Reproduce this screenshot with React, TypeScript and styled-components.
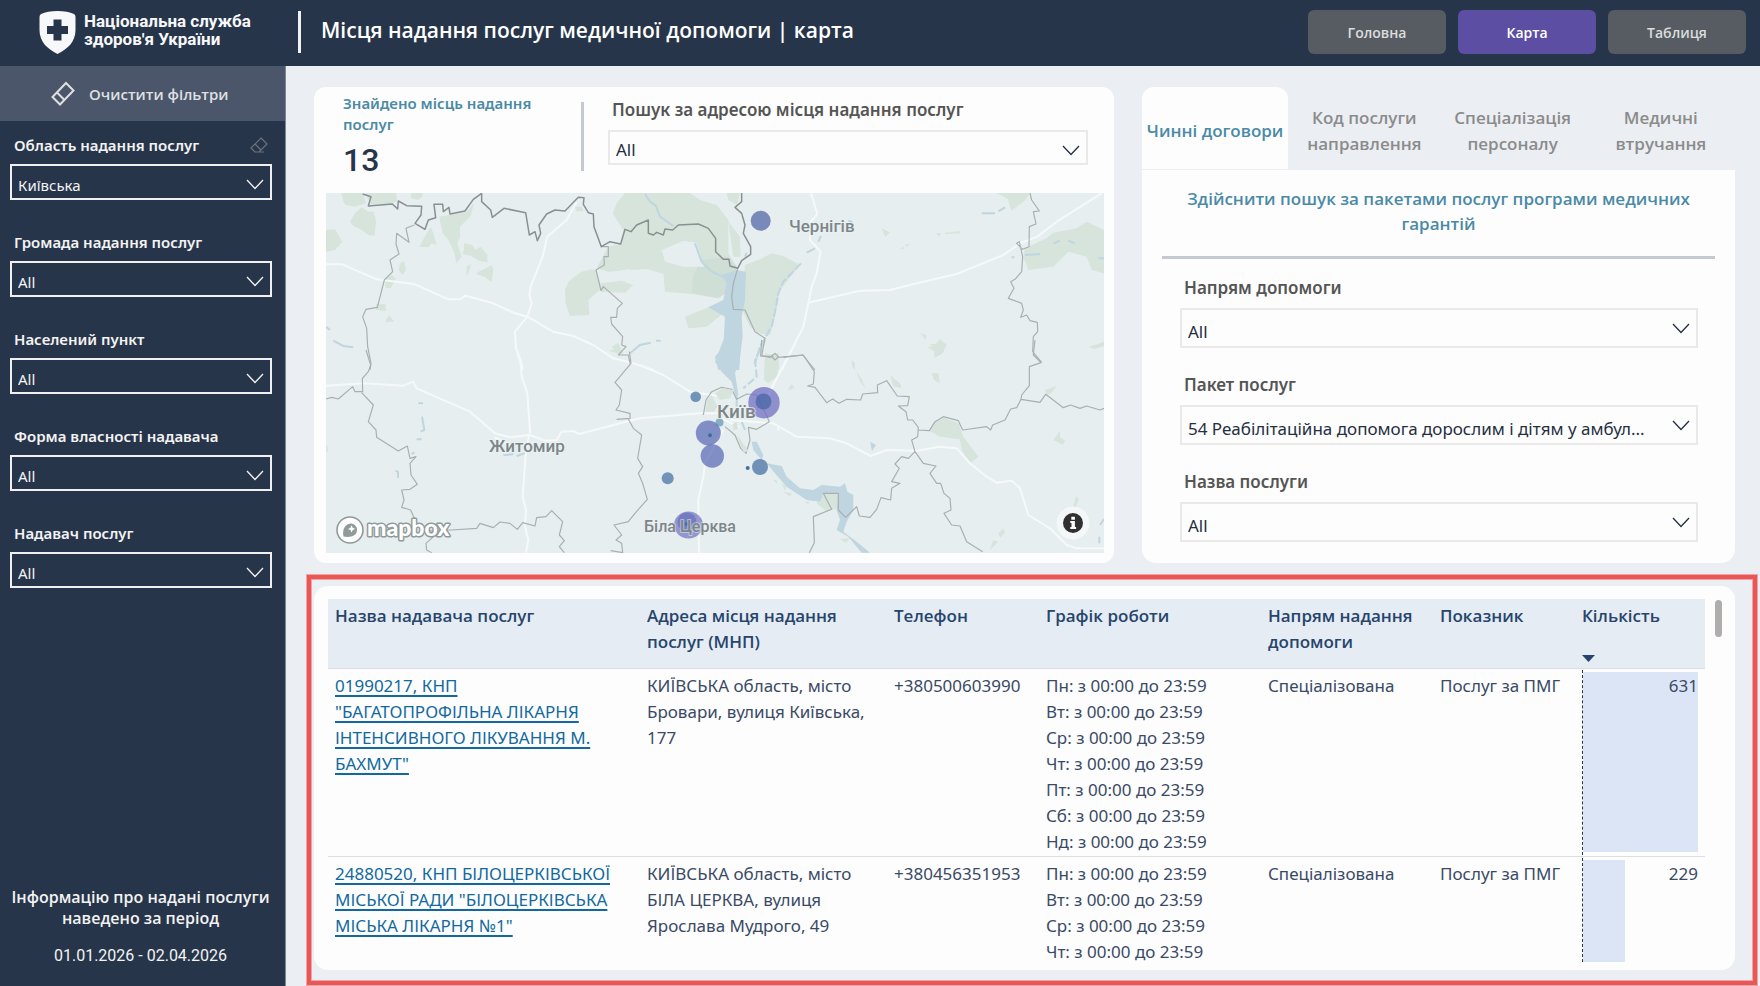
import React, { useId } from "react";
import styled, { createGlobalStyle } from "styled-components";

const color = {
  navy: "#27354a",
  page: "#ebeff3",
  card: "#fdfdfd",
  teal: "#4a8aa6",
  ink: "#252f42",
  label: "#555555",
  line: "#c5cad2",
  box: "#e9e9e9",
};

const uiFont = '"Open Sans", "Noto Sans", sans-serif';
const textFont = '"Noto Sans", "Open Sans", sans-serif';
const brandFont = 'Roboto, "Noto Sans", sans-serif';

const GlobalStyle = createGlobalStyle`
  *, *::before, *::after { box-sizing: border-box; }
  body { margin: 0; background: ${color.page}; font-family: ${uiFont}; color: ${color.ink}; }
  button, select { font-family: inherit; margin: 0; }
  h1, h2, p { margin: 0; font-weight: inherit; }
`;

/* ---------- page frame ---------- */

const Page = styled.div`
  display: flex;
  flex-direction: column;
  height: 100vh;
  overflow: hidden;
`;

const Header = styled.header`
  display: flex;
  align-items: center;
  height: 66px;
  flex: none;
  padding: 0 14px 2px 39px;
  background: ${color.navy};
  color: #fff;
`;

const Brand = styled.div`
  display: flex;
  align-items: center;
  gap: 8px;
  width: 259px;
  flex: none;
  font: 700 17px/18px ${brandFont};
  color: #f7f8f9;
`;

const BrandName = styled.span`
  padding-bottom: 5px;
`;

const HeaderRule = styled.span`
  width: 3px;
  height: 42px;
  margin-right: 20px;
  background: #f1f2f4;
`;

const PageTitle = styled.h1`
  flex: 1;
  padding-bottom: 4px;
  font-size: 21px;
  line-height: 28px;
  font-weight: 600;
`;

const PageNav = styled.nav`
  display: flex;
  gap: 12px;
`;

const NavButton = styled.button<{ $active?: boolean }>`
  width: 138px;
  height: 44px;
  padding: 0;
  border: 0;
  border-radius: 6px;
  background: ${(p) => (p.$active ? "#5c4ea3" : "#575c63")};
  color: ${(p) => (p.$active ? "#ffffff" : "#dcdcdc")};
  font-size: 14px;
  font-weight: 600;
`;

const Body = styled.div`
  display: flex;
  flex: 1;
  min-height: 0;
`;

/* ---------- sidebar ---------- */

const Sidebar = styled.aside`
  display: flex;
  flex-direction: column;
  width: 286px;
  flex: none;
  border-right: 1px solid #7f8794;
  background: ${color.navy};
  color: #f3f3f3;
`;

const ClearButton = styled.button`
  display: flex;
  align-items: center;
  gap: 14px;
  height: 55px;
  flex: none;
  padding: 0 0 0 51px;
  border: 0;
  background: #4b566a;
  color: #dfe0e2;
  font-size: 15px;
  font-weight: 600;
`;

const SideFilters = styled.div`
  display: flex;
  flex-direction: column;
  gap: 29px;
  padding: 11px 13px 0 10px;
`;

const Period = styled.div`
  margin-top: auto;
  padding: 0 4px 20px 0;
  text-align: center;
  font: 600 16px/21px ${uiFont};
  white-space: nowrap;
`;

const PeriodDates = styled.p`
  padding-top: 17px;
  font: 400 16px/20px ${brandFont};
`;

/* ---------- filter fields ---------- */

type Tone = "side" | "top" | "panel";

const fieldMetrics = {
  side: { label: 26, gap: 6, box: 36, drop: 6, size: 15, text: "#f3f3f3", labelText: "#f3f3f3", line: "#f0f0f0" },
  top: { label: 22, gap: 9, box: 35, drop: 4, size: 17, text: color.ink, labelText: color.label, line: color.box },
  panel: { label: 32, gap: 4, box: 40, drop: 6, size: 17, text: color.ink, labelText: color.label, line: color.box },
};

const Field = styled.div`
  display: flex;
  flex-direction: column;
`;

const FieldLabel = styled.label<{ $tone: Tone }>`
  display: flex;
  align-items: center;
  justify-content: space-between;
  height: ${(p) => fieldMetrics[p.$tone].label}px;
  padding: 0 4px;
  color: ${(p) => fieldMetrics[p.$tone].labelText};
  font-family: ${textFont};
  font-size: ${(p) => fieldMetrics[p.$tone].size}px;
  line-height: 22px;
  font-weight: 600;
`;

const SelectWrap = styled.div<{ $tone: Tone }>`
  position: relative;
  display: flex;
  margin-top: ${(p) => fieldMetrics[p.$tone].gap}px;
  color: ${(p) => fieldMetrics[p.$tone].text};
`;

const SelectBox = styled.select<{ $tone: Tone }>`
  appearance: none;
  width: 100%;
  height: ${(p) => fieldMetrics[p.$tone].box}px;
  padding: ${(p) => fieldMetrics[p.$tone].drop}px 30px 0 6px;
  border: 2px solid ${(p) => fieldMetrics[p.$tone].line};
  border-radius: 0;
  background: transparent;
  color: inherit;
  font-family: ${textFont};
  font-size: ${(p) => fieldMetrics[p.$tone].size}px;

  option { color: ${color.ink}; }
`;

const SelectArrow = styled.svg`
  position: absolute;
  right: 8px;
  top: 15px;
  pointer-events: none;
`;

function Filter({ label, value, tone, action }: { label: string; value: string; tone: Tone; action?: React.ReactNode }) {
  const id = useId();
  return (
    <Field>
      <FieldLabel htmlFor={id} $tone={tone}>
        {label}
        {action}
      </FieldLabel>
      <SelectWrap $tone={tone}>
        <SelectBox id={id} $tone={tone} defaultValue={value}>
          <option>{value}</option>
        </SelectBox>
        <SelectArrow width="18" height="11" viewBox="0 0 18 11" fill="none" stroke="currentColor" strokeWidth="1.3">
          <path d="M1 1 9 9.500 17 1" />
        </SelectArrow>
      </SelectWrap>
    </Field>
  );
}

/* ---------- content ---------- */

const Content = styled.main`
  display: flex;
  flex-direction: column;
  flex: 1;
  min-width: 0;
  padding: 21px 3px 1px 21px;
`;

const TopRow = styled.div`
  display: grid;
  grid-template-columns: 800fr 593fr;
  gap: 28px;
  flex: none;
  padding: 0 22px 11px 7px;
`;

const MapCard = styled.section`
  min-width: 0;
  padding: 0 10px 10px 12px;
  border-radius: 12px;
  background: ${color.card};
`;

const MapHead = styled.div`
  display: flex;
  height: 106px;
`;

const Counter = styled.div`
  width: 255px;
  flex: none;
  padding: 6px 40px 0 17px;
  color: ${color.teal};
  font: 600 15px/21px ${textFont};
`;

const CounterValue = styled.p`
  padding: 5px 0 0;
  color: ${color.navy};
  font: 500 32px/40px ${brandFont};
`;

const HeadRule = styled.span`
  width: 3px;
  height: 69px;
  margin: 15px 24px 0 0;
  background: ${color.line};
`;

const AddressSearch = styled.div`
  flex: 1;
  padding: 12px 16px 0 0;
`;

const MapFrame = styled.div`
  position: relative;
  height: 360px;
  overflow: hidden;
  background: #e6eeef;
`;

const MapCanvas = styled.svg`
  display: block;
  width: 100%;
  height: 100%;
`;

const MapLogo = styled.a`
  position: absolute;
  left: 8px;
  bottom: 7px;
  display: flex;
`;

const InfoButton = styled.button`
  position: absolute;
  right: 14px;
  bottom: 13px;
  display: flex;
  padding: 0;
  border: 0;
  background: none;
`;

const SearchPanel = styled.section`
  display: flex;
  flex-direction: column;
  min-width: 0;
`;

const Tabs = styled.div`
  display: grid;
  grid-template-columns: repeat(4, 1fr);
  height: 82px;
  margin-bottom: 1px;
`;

const Tab = styled.button<{ $active?: boolean }>`
  padding: 6px 0 0;
  margin-right: ${(p) => (p.$active ? 2 : 0)}px;
  border: 0;
  border-radius: 12px 12px 0 0;
  background: ${(p) => (p.$active ? color.card : "transparent")};
  color: ${(p) => (p.$active ? color.teal : "#8b8b8b")};
  font-size: 17px;
  line-height: 26px;
  font-weight: 600;
`;

const PanelBody = styled.div`
  flex: 1;
  padding: 16px 20px 0;
  border-radius: 0 0 14px 14px;
  background: ${color.card};
`;

const PanelTitle = styled.h2`
  padding-bottom: 20px;
  border-bottom: 3px solid ${color.line};
  color: ${color.teal};
  font-size: 17px;
  line-height: 25px;
  font-weight: 600;
  text-align: center;
`;

const PanelFilters = styled.div`
  display: flex;
  flex-direction: column;
  gap: 21px;
  padding: 13px 17px 0 18px;
`;

/* ---------- table ---------- */

const Highlight = styled.section`
  flex: 1;
  min-height: 0;
  display: flex;
  margin: 1px 0 0;
  padding: 7px 18px 11px 3px;
  border: 4px solid #e85656;
  box-shadow: 0 0 0 1px #efa3a4, inset 0 0 0 1px #efa3a4;
`;

const TableCard = styled.div`
  display: flex;
  flex: 1;
  min-width: 0;
  gap: 10px;
  padding: 13px 13px 8px 14px;
  border-radius: 14px;
  background: ${color.card};
`;

const TableView = styled.div`
  flex: 1;
  min-width: 0;
  overflow: hidden;
`;

const ScrollThumb = styled.span`
  width: 7px;
  height: 37px;
  margin-top: 1px;
  border-radius: 4px;
  background: #b0aeac;
`;

const Table = styled.table`
  width: 100%;
  table-layout: fixed;
  border-collapse: separate;
  border-spacing: 0;
  font-family: ${textFont};
  font-size: 17px;
  line-height: 26px;
`;

const HeadCell = styled.th`
  position: relative;
  height: 70px;
  padding: 4px 7px;
  border-bottom: 1px solid #dcdde3;
  background: #e5ecf4;
  color: #27456b;
  font-family: ${uiFont};
  font-weight: 600;
  text-align: left;
  vertical-align: top;
`;

const SortMark = styled.svg`
  position: absolute;
  left: 7px;
  bottom: 6px;
`;

const Cell = styled.td`
  height: 188px;
  padding: 4px 7px 1px;
  border-bottom: 1px solid #dcdddf;
  color: #3a4a66;
  vertical-align: top;
  white-space: nowrap;
`;

const AmountCell = styled(Cell)`
  position: relative;
  text-align: right;
`;

const AmountBar = styled.span`
  position: absolute;
  inset: 3px 7px 4px 8px;
`;

const AmountFill = styled.span`
  display: block;
  height: 100%;
  background: #dce5f6;
`;

const AmountAxis = styled.span`
  position: absolute;
  inset: 1px auto 1px 7px;
  border-left: 1px dashed #27354a;
`;

const AmountText = styled.span`
  position: relative;
`;

const ProviderLink = styled.a`
  color: #12699f;
  text-decoration: underline;
  text-decoration-thickness: 2px;
  text-underline-offset: 3px;
`;

const columns = [
  { name: "Назва надавача послуг", share: 312 },
  { name: "Адреса місця надання послуг (МНП)", share: 247 },
  { name: "Телефон", share: 152 },
  { name: "Графік роботи", share: 222 },
  { name: "Напрям надання допомоги", share: 172 },
  { name: "Показник", share: 142 },
  { name: "Кількість", share: 130 },
];
const shareTotal = columns.reduce((sum, c) => sum + c.share, 0);

const week = ["Пн", "Вт", "Ср", "Чт", "Пт", "Сб", "Нд"];

const rows = [
  {
    provider: ["01990217, КНП", '"БАГАТОПРОФІЛЬНА ЛІКАРНЯ', "ІНТЕНСИВНОГО ЛІКУВАННЯ М.", 'БАХМУТ"'],
    address: ["КИЇВСЬКА область, місто", "Бровари, вулиця Київська,", "177"],
    phone: "+380500603990",
    days: 7,
    amount: 631,
  },
  {
    provider: ["24880520, КНП БІЛОЦЕРКІВСЬКОЇ", 'МІСЬКОЇ РАДИ "БІЛОЦЕРКІВСЬКА', "МІСЬКА ЛІКАРНЯ №1\""],
    address: ["КИЇВСЬКА область, місто", "БІЛА ЦЕРКВА, вулиця", "Ярослава Мудрого, 49"],
    phone: "+380456351953",
    days: 4,
    amount: 229,
  },
];
const maxAmount = 631;

function Lines({ items }: { items: string[] }) {
  return (
    <>
      {items.map((text, i) => (
        <React.Fragment key={text}>
          {i > 0 && <br />}
          {text}
        </React.Fragment>
      ))}
    </>
  );
}

/* ---------- icons ---------- */

function Shield() {
  return (
    <svg width="37" height="43" viewBox="0 0 37 43">
      <path fill="#f7f8f9" d="M18.500 0C25 0 31 1 35 3q1.500.8 1.500 3v13c0 12-8 19-18 24C8.500 38 .5 31 .5 19V6q0-2.200 1.500-3C6 1 12 0 18.500 0Z" />
      <path fill={color.navy} d="M14.500 8.500h8v6.500h6.500v8h-6.500v6.500h-8V23H8v-8h6.500z" />
    </svg>
  );
}

function Eraser() {
  return (
    <svg width="24" height="25" viewBox="0 0 24 25" fill="none" stroke="#dfe0e2" strokeWidth="2">
      <path d="M15 2 22.500 9.500 9 23.500 1.500 16ZM6 11.500l7.500 7.500" />
    </svg>
  );
}

function SmallEraser() {
  return (
    <svg width="18" height="16" viewBox="0 0 18 16" fill="none" stroke="#6c737d" strokeWidth="1.200">
      <path d="M11 1 17 7 9 15H5L1 11ZM5 7l6 6M5 15h9" />
    </svg>
  );
}

/* ---------- map ---------- */

const land = "#e6eeef";
const forest = "#d6e4dc";
const water = "#bfd5e0";

// Four map tiles, each drawn with three units to the pixel.
const tile = {
  nw: "translate(-26 -123) scale(.33333)",
  ne: "translate(374 -123) scale(.33333)",
  sw: "translate(-26 157) scale(.33333)",
  se: "translate(314 147) scale(.33333)",
};

function RegionMap() {
  return (
    <MapCanvas viewBox="0 0 778 360" preserveAspectRatio="xMidYMid slice" role="img" aria-label="Карта">
      <g fill={forest}>
        <g transform={tile.nw}>
          <path d="M125 369H188L198 400 165 410 138 405 130 395ZM150 455 165 430 185 412 205 425 222 425 228 455 224 497 205 495 185 480 160 468ZM78 480 105 478 127 515 105 540 78 545ZM195 369H290L290 395 270 403 213 403ZM333 369h36l-4 14-14 6-18-4zM418 440 500 425 522 400 512 438 480 470 480 500 472 520 485 560 470 580 462 545 445 510 428 490ZM392 470 400 490 410 525 395 520 385 532 358 530 372 505ZM492 520l25 5 10 15 15-10 20 25v22l-25-5-25-15-25-6 5-14zM500 590l14-8-8 25-7 10zM530 608l45-22 5 12-5 38-20-15-25-8zM300 580l12-6 6 25-10 16-12-14zM255 630l20-15 12 12-15 28-15-2zM228 702h28l2 22-30-5zM255 755l12-20 16 20zM795 660 805 635 845 605 875 598 890 600 905 655 865 690 868 735 810 738 797 700ZM903 640 965 632 1000 645 975 668 905 665ZM935 830l20-12 10 25-15 8zM1280 369H1320L1310 405 1285 390zM1155 740 1230 710 1270 730 1220 770 1165 775Z" />
          <path d="M938 430 950 400 975 369H1170L1200 390 1250 405 1285 450 1285 550 1310 590 1290 660 1255 685 1175 672 1095 665 1090 612 1040 597 925 605 890 595 925 530 965 520 970 480Z" />
          <path fill="#cfdfd5" d="M1205 570 1285 560 1310 590 1290 660 1255 685 1175 668 1180 615Z" />
          <path fill={land} d="M1085 540 1150 512 1190 518 1212 590 1150 590 1095 575ZM925 608 985 598 1090 612 1092 660 1040 635 985 640Z" />
          <path d="M1285 455 1320 500 1322 560 1300 560Z" />
          <path d="M825 410h20l5 14h-20z" />
        </g>
        <g transform={tile.ne}>
          <path d="M135 585 180 568 215 550 250 558 290 580 300 585 240 660 225 740 210 795 175 790 150 770 125 715ZM890 369h102l-20 25-38 28-10-35zM975 535 1040 505 1060 488 1130 475 1160 455 1212 480V610L1175 600 1160 560 1105 545 1060 590 985 600 970 560ZM545 475l25 12-14 14zM735 488l45-4v6l-45 2zM708 490l16 0-6 10zM600 538l12-8 0 6zM615 525l14-4-8 10zM682 830l18 0 20-22 20 16-15 28-22 12 0-20zM662 790l17 5-2 15zM1165 830l30-8 17-8v15l-30 8zM455 870l10 10v20l-8-8zM195 855l42-5v50h-42z" />
        </g>
        <g transform={tile.sw}><path d="M78 285l5 5v15l-5 3zM925 0h40l5 12-30-5z" /></g>
        <g transform={tile.se}>
          <path d="M375 40 415 50 412 108 385 130 372 120ZM632 60l12 20 2 12zM650 95l15 22 12 30-18-25zM870 12l45 0-5 25-25 15-2-25zM875 100l20 0 5 30-18-10zM750 105l30 25 5 15-25-6zM1215 150l35-12-15 20-15 8zM1240 300l20-28 0 20 16 10-8 12zM868 272 880 250 908 232 955 250 970 290 1015 350 990 370 965 330 960 298 900 290ZM1300 500l8-32 8 10-8 22zM1050 630l10-30 15 5zM1075 580l15-15 5 12-14 16zM530 490 552 462H595L592 505 560 515ZM600 598l30-5-12 15zM400 420l10 0 3 14zM425 430l15 10-5 12zM430 455l25 5-5 10zM495 485l14 0-5 8zM445 145l10-12 8 10-15 8z" />
        </g>
      </g>

      <g fill={water}>
        <g transform={tile.nw}>
          <path d="M1310 600 1338 605 1335 690 1325 740 1328 800 1320 860 1318 900H1255L1245 860 1270 830 1275 740 1225 712 1270 690 1280 640 1265 615Z" />
        </g>
        <g transform={tile.se}>
          <path d="M250 0H302L300 60 285 100 295 165H285L275 125 245 95 225 65ZM335 305H350L370 345 365 360 340 330ZM380 370 425 378 440 410 480 445 520 450 545 435 600 440 615 430 622 455 640 465V510L620 545 610 575 650 605 690 638H665L625 590 590 570 600 540 590 510 595 462 550 460 540 485 500 480 440 440 405 400ZM690 305l18 10-12 18z" />
        </g>
      </g>

      <g fill="none" stroke={water} strokeWidth="6">
        <g transform={tile.nw}>
          <path d="M1035 372 1050 395 1068 408 1080 440 1120 468M1185 520 1205 575 1235 605 1290 630M78 770l12 10M100 812 130 828 160 832M990 850 1020 825 1052 818M1068 812h14" />
        </g>
        <g transform={tile.ne}>
          <path strokeDasharray="26 6" d="M303 580 250 635 235 670 228 710 215 770 180 830 165 880" />
          <path d="M320 548 345 535M355 515 363 498M445 452l12 4M845 430 885 430M895 424 915 412M975 555 1020 552M1060 520l20-8M1105 512l20 8M1195 565h17M935 562h8M135 560l5-12" />
        </g>
        <g transform={tile.sw}>
          <path d="M366 200 373 240 362 245M350 268l15 0M355 160h14M287 362l7 4v18M335 312l8-5M610 316 640 312M650 318 680 308" />
        </g>
        <g transform={tile.se}>
          <path strokeDasharray="24 8" d="M375 0 345 60 350 110 310 145" />
          <path d="M290 165 290 200M305 245 315 270M1380 555l12-18M1378 610v-20" />
        </g>
      </g>

      <g fill="none" stroke="#f6f9f9" strokeWidth="6" strokeLinejoin="round">
        <g transform={tile.nw}>
          <path d="M78 583H127L230 628 345 643 445 688H480L497 677 580 700 640 728 682 740 760 785 820 798 880 825 940 865 1000 880 1060 900M830 395 800 450 742 500 728 560 692 650 688 675 695 700 682 740 645 785 648 835 665 880 668 900" />
        </g>
        <g transform={tile.ne}>
          <path d="M333 369 352 432 333 455 330 510 362 545 350 610 335 650 325 700 310 770 265 860 245 900M325 698 480 662 570 660 650 640 770 612 910 555 960 520 1012 500 1070 455 1205 370" />
        </g>
        <g transform={tile.sw}>
          <path d="M650 0 662 40 665 80 682 130 690 245 678 300 668 440 678 480 675 530 685 570 678 608M78 107 190 100 310 107 340 95 350 115 510 185 585 250 630 262 690 255 735 272 770 270 785 245 820 243 838 252 960 220 1020 205 1200 190 1260 190M585 262 630 285" />
        </g>
        <g transform={tile.se}>
          <path d="M0 75 70 105 150 155 250 170M270 240 400 250 470 290 570 295 620 310 692 348 740 330 830 332 900 320 950 325 990 370 1040 410 1070 428 1115 422 1140 445 1165 525 1230 565 1280 615 1310 625 1392 625M250 270 195 370 190 410 175 480 177 638M470 0 400 135 380 180M215 185 240 215 280 240M245 235 300 262M415 262v10" />
        </g>
      </g>

      <g fill="none" stroke="#a9afb0" strokeWidth="3.500" strokeLinejoin="round">
        <g transform={tile.nw}>
          <path d="M343 465 318 475 327 517 290 490 288 522 297 552 270 570 278 605 253 630 232 712 198 718 188 740 200 775 203 830 213 880 210 900M904 530 925 530V560H912L913 585 888 600 903 662 910 650 967 700 952 715 950 742 932 742 935 762 968 800 965 825 978 830 955 855 985 855 990 880M1313 595 1300 640 1295 680 1300 718 1335 720 1365 785 1395 805 1385 857" />
        </g>
        <g transform={tile.ne}>
          <path d="M185 857 210 862 225 850 235 860 225 870 215 860M235 862 308 855 345 900M990 369 995 390 1018 423 1000 425 1008 462 988 470 987 530 968 538 950 520 958 515 968 560 965 605 945 628 932 635 942 655 925 685 965 700 970 720 962 742 980 735 990 752 1012 757 1013 785 1000 800 998 845 1025 877" />
        </g>
        <g transform={tile.sw}>
          <path d="M198 0 212 45 205 65 187 85 188 125 165 125 158 110 115 147 95 142 78 147M185 128 220 165 205 215 228 240 230 262 295 303 322 288 330 325 348 320 330 340 333 375 352 403 330 418 305 420 312 450 305 472 332 480 345 510 350 530 400 545 398 562 378 580 380 600 395 608M400 540 455 540 530 535 540 520 580 533 600 516 630 520 652 538 668 518 705 528 710 503 738 500 755 482 788 515 778 555 793 572 778 590 793 608M988 5 993 40 945 97 965 120 958 165 948 180 990 190 990 205 950 208M985 207 1000 235 1025 255 1013 325 1028 350 1015 370 1028 400 1042 448 1005 490 985 515 942 525 965 555 948 570 965 580 968 608 932 602" />
        </g>
        <g transform={tile.se}>
          <path d="M365 0 362 48 400 50M430 52 490 45 523 95 520 132 503 138 525 142 560 188 578 177 597 190 620 178 662 180 668 162 713 158 712 135 740 122 772 168 808 170 803 197 775 198 798 215 803 240 818 240 835 262 833 290 815 300 825 335 805 355 785 350 765 372 778 385 755 425 780 430 755 445 752 480 723 473 710 508 690 532 658 528 650 500 617 532 595 510V460H550L575 508 520 530 523 608 508 638M835 270 868 272 885 245 910 230 955 242 968 270 1040 260 1052 270 1058 255 1095 240 1112 207 1130 203 1143 178 1200 187 1217 163 1270 203 1292 195 1320 205 1340 198 1380 210 1392 205M1143 178 1145 165 1168 137V80L1203 68 1180 45 1185 0M825 335 850 370 888 378 870 400 890 430 902 430 912 460 930 475 933 510 912 520 935 555 960 558 980 605 1028 635" />
          <path d="M190 225 198 180 215 155 245 142 275 148 290 178 320 162 350 165 372 210 388 245 350 268 325 262 330 300 318 340 302 325 285 285 255 260" />
        </g>
      </g>
      <g transform={tile.se} fill={forest}>
        <path d="M196 215 202 180 215 165 232 200 222 215ZM225 160 250 144 280 150 270 175 240 180ZM292 285 325 332 312 338 298 310zM278 252l12-6 5 20-15 4z" />
      </g>

      <path
        transform={tile.nw}
        fill="none"
        stroke="#8a9092"
        strokeWidth="4.500"
        strokeLinejoin="round"
        d="M188 372 213 380 205 408 277 402 293 417 295 393 320 407 365 409 363 435 345 460 375 478 385 450 407 443 402 403H428L430 425 447 412 450 432 495 423 520 388 545 370V395L572 420 577 442 612 415 677 428 688 495 705 485 712 512 722 490 717 465 740 432 765 420 795 423 835 382 852 383 850 403 865 428 880 432 882 470 904 530 930 515 962 522 975 478 993 485 1010 465 1045 450V490L1060 495 1070 487 1090 495 1095 477 1118 480 1135 465 1195 462 1225 475 1247 505V545L1270 568H1287L1290 588 1313 595 1325 572 1352 553V530L1330 490 1335 465 1325 430 1305 412 1325 395V369"
      />

      <g>
        <circle cx="434.700" cy="27.700" r="10" fill="#5468a8" fillOpacity=".75" />
        <circle cx="438" cy="209.700" r="15.700" fill="#6f6bc0" fillOpacity=".72" />
        <circle cx="437.500" cy="208.500" r="8" fill="#4767a4" fillOpacity=".75" />
        <circle cx="369.700" cy="203.700" r="5.300" fill="#4a74a6" fillOpacity=".75" />
        <circle cx="393.500" cy="229.500" r="4" fill="#4a84a8" fillOpacity=".6" />
        <circle cx="382.300" cy="240" r="12.500" fill="#5f6eb8" fillOpacity=".75" />
        <circle cx="384" cy="242.300" r="2" fill="#3a6d99" />
        <circle cx="386.300" cy="263" r="11.700" fill="#5f6eb8" fillOpacity=".75" />
        <circle cx="434" cy="274" r="8" fill="#4a70a6" fillOpacity=".75" />
        <circle cx="421.700" cy="275" r="2" fill="#3f74a0" />
        <circle cx="341.700" cy="285.300" r="6" fill="#4a74a6" fillOpacity=".75" />
        <ellipse cx="362.500" cy="332" rx="14.500" ry="13.500" fill="#6766bd" fillOpacity=".65" />
        <circle cx="361" cy="329" r="9.500" fill="#5664b4" fillOpacity=".5" />
        <circle cx="360.500" cy="331" r="2" fill="#3f74a0" />
      </g>

      <g fill="#7c8689" fontFamily='Roboto, "Noto Sans", sans-serif' fontWeight="500" fontSize="17" stroke="#eef3f3" strokeOpacity=".7" strokeWidth="2" paintOrder="stroke" strokeLinejoin="round">
        <text x="463" y="39">Чернігів</text>
        <text x="163" y="259">Житомир</text>
        <text x="391" y="225" fontSize="19">Київ</text>
        <text x="318" y="339" fontSize="16" strokeOpacity=".5">Біла Церква</text>
      </g>
    </MapCanvas>
  );
}

function LogoArt() {
  return (
    <svg width="122" height="32" viewBox="0 0 122 32">
      <circle cx="16" cy="16" r="13" fill="#fff" stroke="#8f9a99" strokeWidth="1.600" />
      <path fill="#8f9a99" d="M9.500 22.500C8 15 11.500 9.500 17 9.500a6.300 6.300 0 0 1 6 6.500c0 5.500-6.500 8-13.500 6.500Z" />
      <path fill="#fff" d="m17.600 11.200 1.100 2.600 2.600 1.100-2.600 1.100-1.100 2.600-1.100-2.600-2.600-1.100 2.600-1.100z" />
      <text x="33" y="22" fontFamily="Lato, sans-serif" fontWeight="900" fontSize="23" fill="#fff" stroke="#8f9a99" strokeWidth="3" paintOrder="stroke" strokeLinejoin="round">
        mapbox
      </text>
    </svg>
  );
}

function InfoArt() {
  return (
    <svg width="34" height="34" viewBox="0 0 34 34">
      <circle cx="17" cy="17" r="16.500" fill="#fff" fillOpacity=".5" />
      <circle cx="17" cy="17" r="10" fill="#303030" />
      <path fill="#fff" d="M15.300 10.800h3.600v3h-3.600zM14.300 15h4.600v6h1.200v2h-5.800v-2h1.200v-4h-1.200z" />
    </svg>
  );
}

export default function App() {
  return (
    <Page>
      <GlobalStyle />
      <Header>
        <Brand>
          <Shield />
          <BrandName>
            Національна служба
            <br />
            здоров'я України
          </BrandName>
        </Brand>
        <HeaderRule />
        <PageTitle>Місця надання послуг медичної допомоги | карта</PageTitle>
        <PageNav>
          <NavButton>Головна</NavButton>
          <NavButton $active>Карта</NavButton>
          <NavButton>Таблиця</NavButton>
        </PageNav>
      </Header>

      <Body>
        <Sidebar>
          <ClearButton>
            <Eraser />
            Очистити фільтри
          </ClearButton>
          <SideFilters>
            <Filter tone="side" label="Область надання послуг" value="Київська" action={<SmallEraser />} />
            <Filter tone="side" label="Громада надання послуг" value="All" />
            <Filter tone="side" label="Населений пункт" value="All" />
            <Filter tone="side" label="Форма власності надавача" value="All" />
            <Filter tone="side" label="Надавач послуг" value="All" />
          </SideFilters>
          <Period>
            <p>
              Інформацію про надані послуги
              <br />
              наведено за період
            </p>
            <PeriodDates>01.01.2026 - 02.04.2026</PeriodDates>
          </Period>
        </Sidebar>

        <Content>
          <TopRow>
            <MapCard>
              <MapHead>
                <Counter>
                  <p>Знайдено місць надання послуг</p>
                  <CounterValue>13</CounterValue>
                </Counter>
                <HeadRule />
                <AddressSearch>
                  <Filter tone="top" label="Пошук за адресою місця надання послуг" value="All" />
                </AddressSearch>
              </MapHead>
              <MapFrame>
                <RegionMap />
                <MapLogo href="#">
                  <LogoArt />
                </MapLogo>
                <InfoButton aria-label="i">
                  <InfoArt />
                </InfoButton>
              </MapFrame>
            </MapCard>

            <SearchPanel>
              <Tabs>
                <Tab $active>Чинні договори</Tab>
                <Tab>
                  Код послуги
                  <br />
                  направлення
                </Tab>
                <Tab>
                  Спеціалізація
                  <br />
                  персоналу
                </Tab>
                <Tab>
                  Медичні
                  <br />
                  втручання
                </Tab>
              </Tabs>
              <PanelBody>
                <PanelTitle>
                  Здійснити пошук за пакетами послуг програми медичних
                  <br />
                  гарантій
                </PanelTitle>
                <PanelFilters>
                  <Filter tone="panel" label="Напрям допомоги" value="All" />
                  <Filter tone="panel" label="Пакет послуг" value="54 Реабілітаційна допомога дорослим і дітям у амбул..." />
                  <Filter tone="panel" label="Назва послуги" value="All" />
                </PanelFilters>
              </PanelBody>
            </SearchPanel>
          </TopRow>

          <Highlight>
            <TableCard>
              <TableView>
                <Table>
                  <colgroup>
                    {columns.map((c) => (
                      <col key={c.name} style={{ width: `${(c.share / shareTotal) * 100}%` }} />
                    ))}
                  </colgroup>
                  <thead>
                    <tr>
                      {columns.map((c, i) => (
                        <HeadCell key={c.name} scope="col">
                          {c.name}
                          {i === columns.length - 1 && (
                            <SortMark width="13" height="7" viewBox="0 0 13 7">
                              <path fill="#27456b" d="M0 0h13L6.500 7z" />
                            </SortMark>
                          )}
                        </HeadCell>
                      ))}
                    </tr>
                  </thead>
                  <tbody>
                    {rows.map((r) => (
                      <tr key={r.phone}>
                        <Cell>
                          <ProviderLink href="#">
                            <Lines items={r.provider} />
                          </ProviderLink>
                        </Cell>
                        <Cell>
                          <Lines items={r.address} />
                        </Cell>
                        <Cell>{r.phone}</Cell>
                        <Cell>
                          <Lines items={week.slice(0, r.days).map((d) => `${d}: з 00:00 до 23:59`)} />
                        </Cell>
                        <Cell>Спеціалізована</Cell>
                        <Cell>Послуг за ПМГ</Cell>
                        <AmountCell>
                          <AmountBar>
                            <AmountFill style={{ width: `${(r.amount / maxAmount) * 100}%` }} />
                          </AmountBar>
                          <AmountAxis />
                          <AmountText>{r.amount}</AmountText>
                        </AmountCell>
                      </tr>
                    ))}
                  </tbody>
                </Table>
              </TableView>
              <ScrollThumb />
            </TableCard>
          </Highlight>
        </Content>
      </Body>
    </Page>
  );
}
